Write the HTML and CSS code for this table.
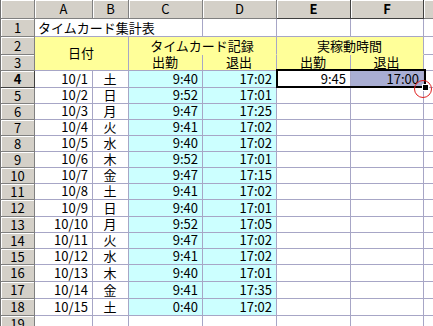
FILE: index.html
```html
<!DOCTYPE html>
<html lang="ja">
<head>
    <meta charset="UTF-8">
    <title>タイムカード集計表</title>
    <link rel="stylesheet" href="styles.css">
</head>
<body>
    <div class="sheet">
        <table class="grid">
            <colgroup>
                <col class="c-rh">
                <col class="c-a">
                <col class="c-b">
                <col class="c-t">
                <col class="c-t">
                <col class="c-t">
                <col class="c-f">
                <col class="c-g">
            </colgroup>
            <tr class="h19">
                <th class="corner"></th>
                <th class="ch">A</th>
                <th class="ch">B</th>
                <th class="ch">C</th>
                <th class="ch">D</th>
                <th class="ch sel">E</th>
                <th class="ch sel">F</th>
                <th class="ch"></th>
            </tr>
            <tr class="h18">
                <th class="rh">1</th>
                <td colspan="3" class="title">タイムカード集計表</td>
                <td></td><td></td><td></td><td></td>
            </tr>
            <tr class="h18">
                <th class="rh">2</th>
                <td colspan="2" rowspan="2" class="yl mid">日付</td>
                <td colspan="2" class="yl ctr top">タイムカード記録</td>
                <td colspan="2" class="yl ctr top">実稼動時間</td>
                <td></td>
            </tr>
            <tr class="h16">
                <th class="rh">3</th>
                <td class="yl ctr">出勤</td>
                <td class="yl ctr">退出</td>
                <td class="yl ctr">出勤</td>
                <td class="yl ctr">退出</td>
                <td></td>
            </tr>
            <tr class="h17">
                <th class="rh sel">4</th>
                <td class="num">10/1</td><td class="ctr">土</td>
                <td class="cy num">9:40</td><td class="cy num">17:02</td>
                <td class="num">9:45</td><td class="num picked">17:00</td><td></td>
            </tr>
            <tr class="h16">
                <th class="rh">5</th>
                <td class="num">10/2</td><td class="ctr">日</td>
                <td class="cy num">9:52</td><td class="cy num">17:01</td>
                <td></td><td></td><td></td>
            </tr>
            <tr class="h16">
                <th class="rh">6</th>
                <td class="num">10/3</td><td class="ctr">月</td>
                <td class="cy num">9:47</td><td class="cy num">17:25</td>
                <td></td><td></td><td></td>
            </tr>
            <tr class="h16">
                <th class="rh">7</th>
                <td class="num">10/4</td><td class="ctr">火</td>
                <td class="cy num">9:41</td><td class="cy num">17:02</td>
                <td></td><td></td><td></td>
            </tr>
            <tr class="h16">
                <th class="rh">8</th>
                <td class="num">10/5</td><td class="ctr">水</td>
                <td class="cy num">9:40</td><td class="cy num">17:02</td>
                <td></td><td></td><td></td>
            </tr>
            <tr class="h16">
                <th class="rh">9</th>
                <td class="num">10/6</td><td class="ctr">木</td>
                <td class="cy num">9:52</td><td class="cy num">17:01</td>
                <td></td><td></td><td></td>
            </tr>
            <tr class="h16">
                <th class="rh">10</th>
                <td class="num">10/7</td><td class="ctr">金</td>
                <td class="cy num">9:47</td><td class="cy num">17:15</td>
                <td></td><td></td><td></td>
            </tr>
            <tr class="h16">
                <th class="rh">11</th>
                <td class="num">10/8</td><td class="ctr">土</td>
                <td class="cy num">9:41</td><td class="cy num">17:02</td>
                <td></td><td></td><td></td>
            </tr>
            <tr class="h17">
                <th class="rh">12</th>
                <td class="num">10/9</td><td class="ctr">日</td>
                <td class="cy num">9:40</td><td class="cy num">17:01</td>
                <td></td><td></td><td></td>
            </tr>
            <tr class="h16">
                <th class="rh">13</th>
                <td class="num">10/10</td><td class="ctr">月</td>
                <td class="cy num">9:52</td><td class="cy num">17:05</td>
                <td></td><td></td><td></td>
            </tr>
            <tr class="h16">
                <th class="rh">14</th>
                <td class="num">10/11</td><td class="ctr">火</td>
                <td class="cy num">9:47</td><td class="cy num">17:02</td>
                <td></td><td></td><td></td>
            </tr>
            <tr class="h16">
                <th class="rh">15</th>
                <td class="num">10/12</td><td class="ctr">水</td>
                <td class="cy num">9:41</td><td class="cy num">17:02</td>
                <td></td><td></td><td></td>
            </tr>
            <tr class="h17">
                <th class="rh">16</th>
                <td class="num">10/13</td><td class="ctr">木</td>
                <td class="cy num">9:40</td><td class="cy num">17:01</td>
                <td></td><td></td><td></td>
            </tr>
            <tr class="h17">
                <th class="rh">17</th>
                <td class="num">10/14</td><td class="ctr">金</td>
                <td class="cy num">9:41</td><td class="cy num">17:35</td>
                <td></td><td></td><td></td>
            </tr>
            <tr class="h17">
                <th class="rh">18</th>
                <td class="num">10/15</td><td class="ctr">土</td>
                <td class="cy num">0:40</td><td class="cy num">17:02</td>
                <td></td><td></td><td></td>
            </tr>
            <tr class="h17">
                <th class="rh">19</th>
                <td></td><td></td><td></td><td></td><td></td><td></td><td></td>
            </tr>
        </table>

        <!-- 選択範囲 E4:F4 の太枠とフィルハンドル -->
        <div class="selection"><span class="handle"></span></div>
        <div class="mark"></div>
    </div>
</body>
</html>
```

FILE: styles.css
```css
html, body {
    margin: 0;
    overflow: hidden;
    background: #ffffff;
}
.sheet {
    position: relative;
    width: 433px;
    height: 326px;
    overflow: hidden;
}
.grid {
    border-collapse: separate;
    border-spacing: 0;
    table-layout: fixed;
    width: 499px;
    font-family: "Noto Sans CJK JP", sans-serif;
    font-size: 13px;
    color: #000;
}
.c-rh { width: 35px; }
.c-a { width: 58px; }
.c-b { width: 36px; }
.c-t { width: 74px; }
.c-f { width: 73px; }
.c-g { width: 75px; }

.h19 { height: 19px; }
.h18 { height: 18px; }
.h17 { height: 17px; }
.h16 { height: 16px; }

td, th {
    padding: 0 4px 1px 3px;
    line-height: 14px;
    white-space: nowrap;
    overflow: visible;
    vertical-align: bottom;
    border-right: 1px solid #a7a6c6;
    border-bottom: 1px solid #a7a6c6;
}

/* 行・列見出し */
.corner, .ch, .rh {
    background: #d4d0c8;
    font-weight: normal;
    text-align: center;
    vertical-align: middle;
    padding: 0;
    border-right: 1px solid #808080;
    border-bottom: 1px solid #808080;
    box-shadow: inset 1px 1px 0 #ffffff;
}
.corner, .rh {
    border-left: 1px solid #707070;
}
.ch.sel, .rh.sel {
    font-weight: bold;
    border-right-color: #404040;
    border-bottom-color: #404040;
}

.title {
    text-align: left;
    padding-left: 3px;
}
.num { text-align: right; }
.ctr { text-align: center; }
.mid {
    text-align: center;
    vertical-align: middle;
}
.yl { background: #ffff99; }
.yl.top { border-bottom-color: #ffff99; }
.cy { background: #ccffff; }
.picked { background: #a9aed3; }

.selection {
    position: absolute;
    left: 276px;
    top: 69px;
    width: 146px;
    height: 15px;
    border: 2px solid #000;
}
.handle {
    position: absolute;
    right: -5px;
    bottom: -5px;
    width: 5px;
    height: 5px;
    background: #000;
    border: 1px solid #fff;
}
.mark {
    position: absolute;
    left: 414px;
    top: 80px;
    width: 16px;
    height: 16px;
    border: 1px solid #e02020;
    border-radius: 50%;
}
```
